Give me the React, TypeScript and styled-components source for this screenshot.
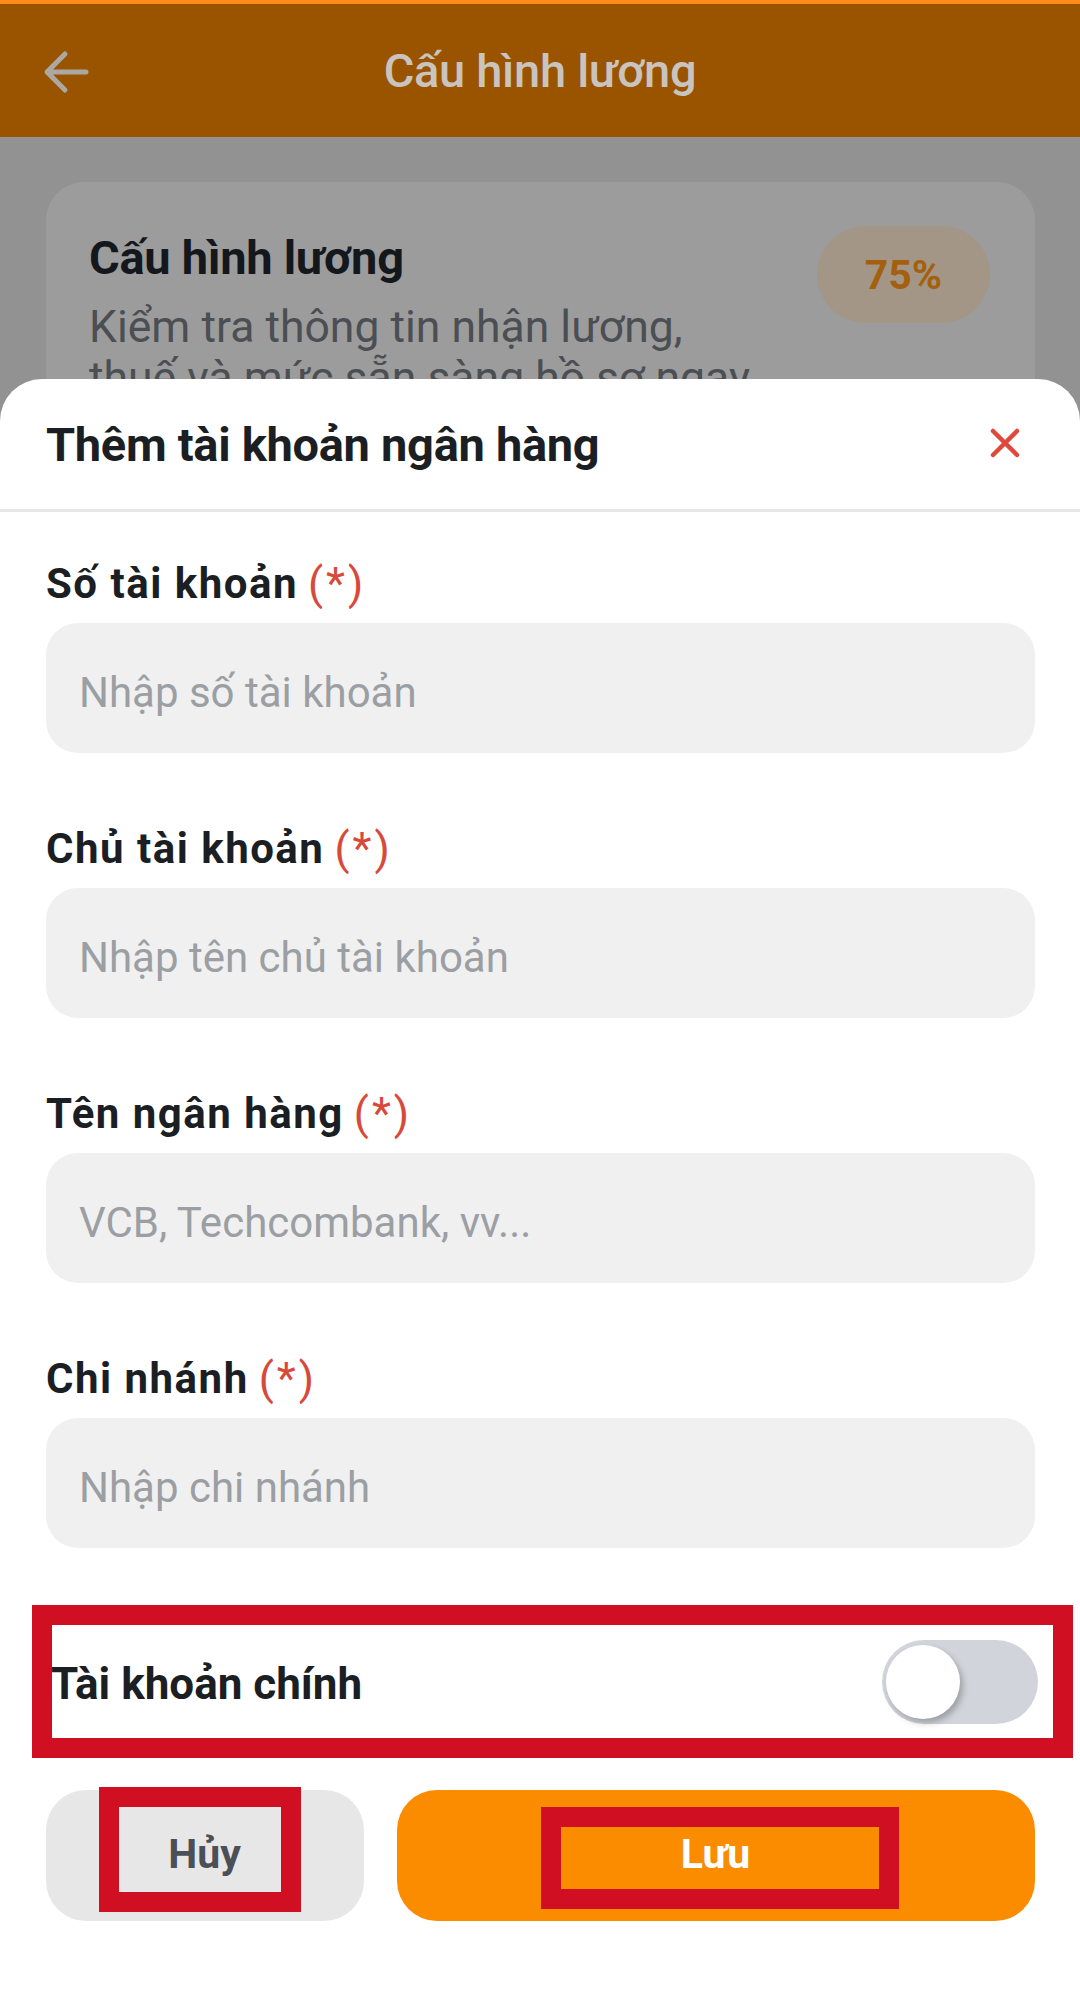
import React, { useState } from 'react';
import styled, { createGlobalStyle } from 'styled-components';

const GlobalStyle = createGlobalStyle`
  html, body {
    margin: 0;
    padding: 0;
  }
  body {
    font-family: Roboto, 'Noto Sans', Arial, sans-serif;
    -webkit-font-smoothing: antialiased;
  }
  * {
    box-sizing: border-box;
  }
`;

const Screen = styled.div`
  position: relative;
  width: 1080px;
  height: 1995px;
  overflow: hidden;
  background: #929292;
`;

const TopBar = styled.header`
  display: flex;
  align-items: center;
  height: 137px;
  padding: 0 0 0 43px;
  background: #9a5400;
  border-top: 4px solid #ff8c1a;
  position: relative;
`;

const BackButton = styled.div`
  display: flex;
  align-items: center;
  width: 46px;
  height: 46px;
  margin-top: 2px;
`;

const TopTitle = styled.h1`
  flex: 1;
  margin: 0 89px 0 0;
  text-align: center;
  font-size: 47px;
  font-weight: 500;
  color: #c9c4bf;
  letter-spacing: -0.3px;
`;

const Content = styled.div`
  padding: 45px 45px 0 46px;
`;

const SummaryCard = styled.div`
  display: flex;
  justify-content: space-between;
  align-items: flex-start;
  padding: 44px 45px 40px 43px;
  background: #9c9c9c;
  border-radius: 38px;
  min-height: 300px;
`;

const CardText = styled.div`
  max-width: 680px;
`;

const CardTitle = styled.div`
  font-size: 47px;
  line-height: 64px;
  font-weight: 700;
  color: #14181d;
  letter-spacing: -0.3px;
`;

const CardSubtitle = styled.div`
  margin-top: 12px;
  font-size: 44.5px;
  line-height: 51px;
  color: #4b4e52;
`;

const Badge = styled.div`
  display: flex;
  align-items: center;
  justify-content: center;
  width: 173px;
  height: 97px;
  border-radius: 49px;
  background: #a39686;
  font-size: 41px;
  font-weight: 700;
  color: #a3600f;
`;

const Sheet = styled.section`
  position: absolute;
  top: 379px;
  left: 0;
  right: 0;
  bottom: 0;
  background: #ffffff;
  border-radius: 42px 42px 0 0;
`;

const SheetHeader = styled.div`
  display: flex;
  align-items: center;
  justify-content: space-between;
  height: 133px;
  padding: 0 60px 0 46px;
  border-bottom: 3px solid #e7e7e7;
`;

const SheetTitle = styled.h2`
  margin: 0;
  font-size: 47px;
  font-weight: 700;
  color: #1b1f24;
  letter-spacing: -0.3px;
`;

const CloseButton = styled.div`
  display: flex;
  width: 30px;
  height: 30px;
  margin-top: -2px;
`;

const Form = styled.div`
  display: flex;
  flex-direction: column;
  gap: 71px;
  padding: 47px 45px 0 46px;
`;

const Field = styled.div`
  display: flex;
  flex-direction: column;
  gap: 14px;
`;

const Label = styled.label`
  display: flex;
  align-items: center;
  font-size: 42px;
  line-height: 50px;
  font-weight: 700;
  letter-spacing: 1.5px;
  color: #1b1f24;
`;

const Required = styled.span`
  font-size: 44px;
  font-weight: 400;
  letter-spacing: 3px;
  color: #d9493a;
  margin-left: 10px;
`;

const Input = styled.input`
  width: 100%;
  height: 130px;
  padding: 8px 33px 0;
  border: none;
  outline: none;
  border-radius: 32px;
  background: #f0f0f0;
  font-family: inherit;
  font-size: 42px;
  color: #1b1f24;

  &::placeholder {
    color: #9b9fa3;
  }
`;

const MarkedRow = styled.div`
  display: flex;
  align-items: center;
  justify-content: space-between;
  height: 153px;
  margin: 57px 7px 0 32px;
  padding: 4px 15px 0 0;
  border: 20px solid #d10f22;
`;

const RowLabel = styled.div`
  margin-left: -1px;
  font-size: 44px;
  font-weight: 700;
  color: #1b1f24;
`;

const Track = styled.div<{ $on: boolean }>`
  display: flex;
  align-items: center;
  justify-content: ${(p) => (p.$on ? 'flex-end' : 'flex-start')};
  width: 156px;
  height: 84px;
  padding: 0 4px;
  margin-top: -4px;
  border-radius: 42px;
  background: ${(p) => (p.$on ? '#fb8c00' : '#d1d5db')};
  cursor: pointer;
`;

const Knob = styled.div`
  width: 74px;
  height: 74px;
  border-radius: 50%;
  background: #ffffff;
  box-shadow: 3px 4px 6px rgba(0, 0, 0, 0.25);
`;

const Actions = styled.div`
  display: flex;
  gap: 33px;
  margin-top: 32px;
  padding: 0 45px 0 46px;
`;

const ActionButton = styled.button<{ $primary?: boolean }>`
  display: flex;
  align-items: center;
  justify-content: center;
  height: 131px;
  border: none;
  border-radius: 40px;
  font-family: inherit;
  font-size: 41px;
  font-weight: 700;
  background: ${(p) => (p.$primary ? '#fb8c00' : '#e7e7e7')};
  color: ${(p) => (p.$primary ? '#ffffff' : '#4b5058')};
  flex: ${(p) => (p.$primary ? '1' : '0 0 318px')};
  padding: 0;
`;

// red annotation frame drawn round the button label
const Marker = styled.span<{ $w: number; $h: number; $shift: string; $pad: string }>`
  display: flex;
  align-items: center;
  justify-content: center;
  width: ${(p) => p.$w}px;
  height: ${(p) => p.$h}px;
  margin: ${(p) => p.$shift};
  padding: ${(p) => p.$pad};
  border: 20px solid #d10f22;
`;

const ArrowLeft = () => (
  <svg width="46" height="44" viewBox="0 0 46 44" fill="none">
    <path
      d="M43 22H5M22 4L4 22l18 18"
      stroke="#aba8a4"
      strokeWidth="5"
      strokeLinecap="round"
      strokeLinejoin="round"
    />
  </svg>
);

const CloseIcon = () => (
  <svg width="30" height="30" viewBox="0 0 30 30" fill="none">
    <path
      d="M3 3l24 24M27 3L3 27"
      stroke="#e0483c"
      strokeWidth="4.5"
      strokeLinecap="round"
    />
  </svg>
);

const fields = [
  { label: 'Số tài khoản', placeholder: 'Nhập số tài khoản' },
  { label: 'Chủ tài khoản', placeholder: 'Nhập tên chủ tài khoản' },
  { label: 'Tên ngân hàng', placeholder: 'VCB, Techcombank, vv...' },
  { label: 'Chi nhánh', placeholder: 'Nhập chi nhánh' },
];

export default function App() {
  const [primary, setPrimary] = useState(false);

  return (
    <>
      <GlobalStyle />
      <Screen>
        <TopBar>
          <BackButton>
            <ArrowLeft />
          </BackButton>
          <TopTitle>Cấu hình lương</TopTitle>
        </TopBar>
        <Content>
          <SummaryCard>
            <CardText>
              <CardTitle>Cấu hình lương</CardTitle>
              <CardSubtitle>
                Kiểm tra thông tin nhận lương, thuế và mức sẵn sàng hồ sơ ngay
              </CardSubtitle>
            </CardText>
            <Badge>75%</Badge>
          </SummaryCard>
        </Content>

        <Sheet>
          <SheetHeader>
            <SheetTitle>Thêm tài khoản ngân hàng</SheetTitle>
            <CloseButton>
              <CloseIcon />
            </CloseButton>
          </SheetHeader>
          <Form>
            {fields.map((f) => (
              <Field key={f.label}>
                <Label>
                  {f.label}
                  <Required>(*)</Required>
                </Label>
                <Input placeholder={f.placeholder} />
              </Field>
            ))}
          </Form>
          <MarkedRow>
            <RowLabel>Tài khoản chính</RowLabel>
            <Track $on={primary} onClick={() => setPrimary(!primary)}>
              <Knob />
            </Track>
          </MarkedRow>
          <Actions>
            <ActionButton>
              <Marker $w={202} $h={125} $shift="0 10px 12px 0" $pad="9px 0 0 9px">
                Hủy
              </Marker>
            </ActionButton>
            <ActionButton $primary>
              <Marker $w={358} $h={102} $shift="5px 0 0 8px" $pad="0 9px 8px 0">
                Lưu
              </Marker>
            </ActionButton>
          </Actions>
        </Sheet>
      </Screen>
    </>
  );
}
